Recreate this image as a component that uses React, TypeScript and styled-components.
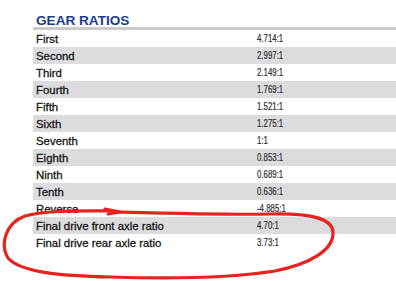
import { createGlobalStyle } from "styled-components";
import styled from "styled-components";

interface RatioRow {
  gear: string;
  ratio: string;
}

const ratios: RatioRow[] = [
  { gear: "First", ratio: "4.714:1" },
  { gear: "Second", ratio: "2.997:1" },
  { gear: "Third", ratio: "2.149:1" },
  { gear: "Fourth", ratio: "1.769:1" },
  { gear: "Fifth", ratio: "1.521:1" },
  { gear: "Sixth", ratio: "1.275:1" },
  { gear: "Seventh", ratio: "1:1" },
  { gear: "Eighth", ratio: "0.853:1" },
  { gear: "Ninth", ratio: "0.689:1" },
  { gear: "Tenth", ratio: "0.636:1" },
  { gear: "Reverse", ratio: "-4.885:1" },
  { gear: "Final drive front axle ratio", ratio: "4.70:1" },
  { gear: "Final drive rear axle ratio", ratio: "3.73:1" },
];

const App = () => {
  return (
    <>
      <GlobalStyle />
      <Page>
        <Sheet>
          <Title>GEAR RATIOS</Title>
          <Table>
            {ratios.map((row, i) => (
              <Row key={row.gear} $shaded={i % 2 === 1}>
                <Label>{row.gear}</Label>
                <ValueCell>
                  <Value>{row.ratio}</Value>
                </ValueCell>
              </Row>
            ))}
          </Table>
        </Sheet>
        {/* hand drawn red circle around the final drive rows */}
        <Scribble viewBox="0 0 396 281" width="396" height="281">
          <path
            d="M 112 211 C 80 211, 45 210, 25 216 C 5 223, 0 245, 8 258 C 20 272, 60 276, 110 277 C 170 279, 230 278, 275 271 C 310 264, 334 250, 333 232 C 332 218, 310 213, 270 214 C 240 215, 200 214, 118 212"
            fill="none"
            stroke="#e5241d"
            strokeWidth="3.2"
            strokeLinecap="round"
            strokeLinejoin="round"
          />
          <path
            d="M 105 209 L 120 212 L 108 214"
            fill="none"
            stroke="#e5241d"
            strokeWidth="3"
            strokeLinecap="round"
            strokeLinejoin="round"
          />
        </Scribble>
      </Page>
    </>
  );
};

export default App;

const GlobalStyle = createGlobalStyle`
  html, body {
    margin: 0;
    padding: 0;
    background: #ffffff;
  }
`;

const Page = styled.div`
  position: relative;
  width: 396px;
  height: 281px;
  overflow: hidden;
  background: #ffffff;
`;

const Sheet = styled.div`
  display: flex;
  flex-direction: column;
  padding: 14px 0 0 33px;
`;

const Title = styled.h2`
  margin: 0;
  padding-left: 3px;
  height: 13px;
  line-height: 13px;
  font-family: "Liberation Sans", Arial, sans-serif;
  font-size: 13.6px;
  font-weight: 700;
  color: #1c3d8f;
  border-bottom: 3px solid #cacaca;
  box-sizing: content-box;
`;

const Table = styled.div`
  display: flex;
  flex-direction: column;
`;

const Row = styled.div<{ $shaded: boolean }>`
  display: grid;
  grid-template-columns: 224px 1fr;
  align-items: center;
  height: 17px;
  background: ${(p) => (p.$shaded ? "#dcdcdf" : "#ffffff")};
`;

const Label = styled.span`
  padding-left: 3px;
  font-family: "Liberation Sans", Arial, sans-serif;
  font-size: 11.4px;
  color: #161616;
  -webkit-text-stroke: 0.3px #161616;
  white-space: nowrap;
`;

const ValueCell = styled.div`
  display: flex;
  align-items: center;
`;

const Value = styled.span`
  display: inline-block;
  font-family: "Liberation Sans", Arial, sans-serif;
  font-size: 10.2px;
  color: #2e2e2e;
  -webkit-text-stroke: 0.2px #2e2e2e;
  white-space: nowrap;
  transform: scaleX(0.77);
  transform-origin: left center;
`;

const Scribble = styled.svg`
  position: absolute;
  left: 0;
  top: 0;
  pointer-events: none;
`;
